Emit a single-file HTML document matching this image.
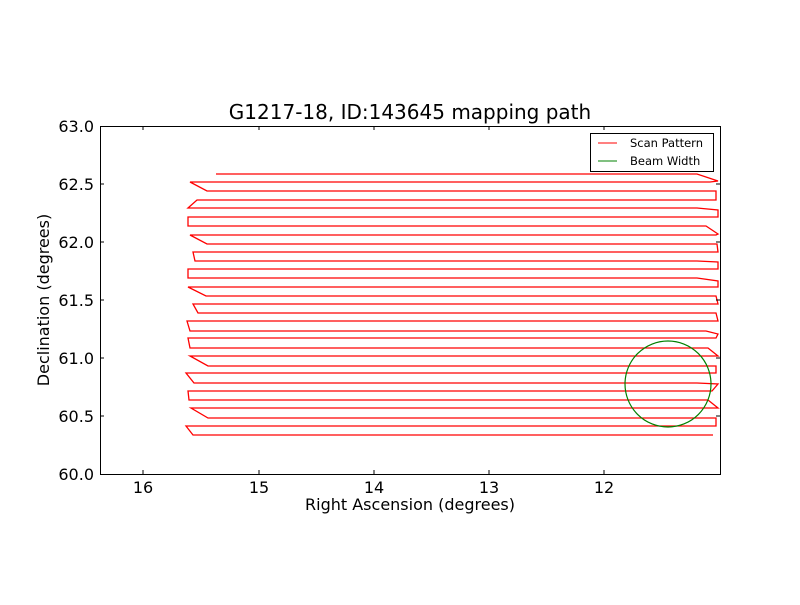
<!DOCTYPE html>
<html><head><style>html,body{margin:0;padding:0;background:#fff}</style></head>
<body>
<svg width="800" height="600" xmlns="http://www.w3.org/2000/svg" font-family="DejaVu Sans, Liberation Sans, sans-serif">
<rect width="800" height="600" fill="#fff"/>
<text x="410" y="119" font-size="20" text-anchor="middle">G1217-18, ID:143645 mapping path</text>
<polyline fill="none" stroke="#f00" stroke-width="1.3" points="
216,174 697,174 718,181 710,182 190,182 207,191 716,191 716,200 197,200 188,208 697,208 718,210 718,217 188,217 188,226 706,226 718,234 716,235 190,235 207,244 717,244 718,252 193,252 195,261 697,261 718,262 718,269 188,269 188,278 697,278 718,281 718,287 188,287 206,296 716,296 718,304 193,304 198,313 716,313 718,321 187,321 190,331 706,331 718,334 716,338 188,338 190,348 708,348 718,356 190,356 208,366 716,366 716,373 186,373 194,383 697,383 718,384 712,391 188,391 189,400 708,400 718,408 191,408 208,418 716,418 716,426 186,426 193,435 713,435"/>
<circle cx="668" cy="384" r="43" fill="none" stroke="#008000" stroke-width="1.2"/>
<rect x="100.5" y="126.5" width="620" height="348" fill="none" stroke="#000" stroke-width="1"/>
<g stroke="#000" stroke-width="1">
<line x1="143" y1="474" x2="143" y2="470"/><line x1="143" y1="126" x2="143" y2="130"/>
<line x1="259" y1="474" x2="259" y2="470"/><line x1="259" y1="126" x2="259" y2="130"/>
<line x1="374" y1="474" x2="374" y2="470"/><line x1="374" y1="126" x2="374" y2="130"/>
<line x1="489" y1="474" x2="489" y2="470"/><line x1="489" y1="126" x2="489" y2="130"/>
<line x1="604" y1="474" x2="604" y2="470"/><line x1="604" y1="126" x2="604" y2="130"/>
<line x1="100" y1="184" x2="104" y2="184"/><line x1="720" y1="184" x2="716" y2="184"/>
<line x1="100" y1="242" x2="104" y2="242"/><line x1="720" y1="242" x2="716" y2="242"/>
<line x1="100" y1="300" x2="104" y2="300"/><line x1="720" y1="300" x2="716" y2="300"/>
<line x1="100" y1="358" x2="104" y2="358"/><line x1="720" y1="358" x2="716" y2="358"/>
<line x1="100" y1="416" x2="104" y2="416"/><line x1="720" y1="416" x2="716" y2="416"/>
</g>
<g font-size="16" text-anchor="middle">
<text x="143" y="493">16</text><text x="259" y="493">15</text><text x="374" y="493">14</text><text x="489" y="493">13</text><text x="604" y="493">12</text>
</g>
<g font-size="16" text-anchor="end">
<text x="94" y="132">63.0</text><text x="94" y="190">62.5</text><text x="94" y="248">62.0</text><text x="94" y="306">61.5</text><text x="94" y="364">61.0</text><text x="94" y="422">60.5</text><text x="94" y="480">60.0</text>
</g>
<text x="410" y="510" font-size="16" text-anchor="middle">Right Ascension (degrees)</text>
<text transform="translate(49,300) rotate(-90)" font-size="16" text-anchor="middle">Declination (degrees)</text>
<rect x="590.5" y="133.5" width="123" height="38" fill="#fff" stroke="#000"/>
<line x1="598" y1="143" x2="617" y2="143" stroke="#f00"/>
<line x1="598" y1="161" x2="617" y2="161" stroke="#008000"/>
<text x="630" y="147" font-size="11.5">Scan Pattern</text>
<text x="630" y="165" font-size="11.5">Beam Width</text>
</svg>
</body></html>
